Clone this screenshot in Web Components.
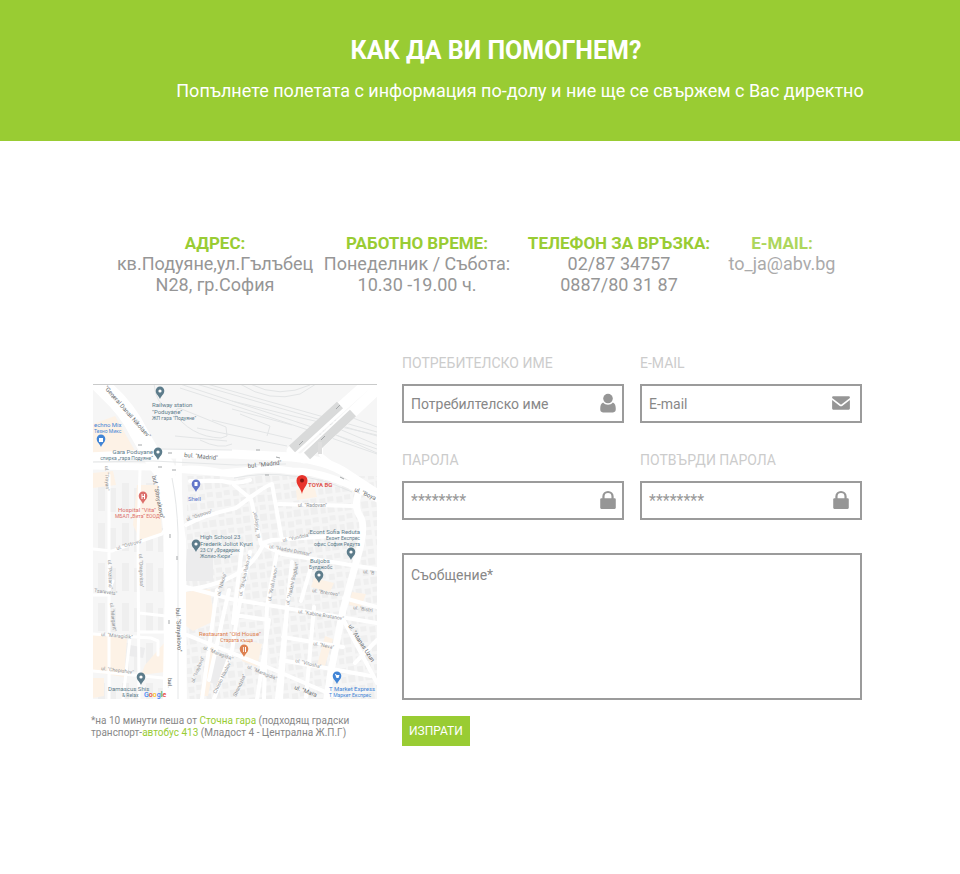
<!DOCTYPE html>
<html lang="bg">
<head>
<meta charset="utf-8">
<meta name="viewport" content="width=device-width, initial-scale=1">
<title>Как да Ви помогнем?</title>
<style>
  body { margin: 0; background: #fff; font-family: Roboto, "Liberation Sans", sans-serif; --green: #99cc33; --grey: #969696; }
</style>
</head>
<body>
<help-page></help-page>
<script>
const define = (name, html, setup) => customElements.define(name, class extends HTMLElement {
  constructor() {
    super();
    const root = this.attachShadow({ mode: 'open' });
    const t = document.createElement('template');
    t.innerHTML = html;
    root.append(t.content.cloneNode(true));
  }
  connectedCallback() { if (setup) setup(this, this.shadowRoot); }
});

define('page-banner', `
<style>
  :host { display: block; background: var(--green); color: #fff; text-align: center; padding: 36px 0 37px; }
  h1 { margin: 0; padding-left: 32px; font-size: 25px; line-height: 30px; font-weight: 700; }
  p { margin: 12px 0 0; padding-left: 80px; font-size: 18px; line-height: 26px; }
</style>
<h1><slot name="title"></slot></h1>
<p><slot></slot></p>`);

define('contact-item', `
<style>
  :host { display: block; text-align: center; white-space: nowrap; color: var(--grey); font-size: 18px; line-height: 21px; }
  :host([soft]) { opacity: .8; }
  h2 { margin: 0; color: var(--green); font-size: 17px; line-height: 20px; font-weight: 700; }
  ::slotted(a) { color: inherit; text-decoration: none; }
</style>
<h2><slot name="title"></slot></h2>
<slot></slot>`);

const icons = {
  user: '<circle cx="9" cy="5" r="4.3"/><path d="M4.6 8.6C5.8 10 7.3 10.6 9 10.6s3.200-.6 4.400-2C15.400 9.300 16 11.500 16 14.500c0 2-.8 3-2.500 3h-9C2.800 17.500 2 16.500 2 14.500c0-3 .6-5.200 2.600-5.900z"/>',
  mail: '<path d="M1 4Q1 3 2 3h14Q17 3 17 4v.6L9 10.500 1 4.600z"/><path d="M1 6.400l6.900 5.200q1.100.8 2.200 0L17 6.400V14q0 1-1 1H2q-1 0-1-1z"/>',
  lock: '<path d="M2 8.500Q2 7.500 3 7.500h12q1 0 1 1V16q0 1-1 1H3q-1 0-1-1z"/><path d="M4.900 9V5.900a4.100 4.100 0 0 1 8.200 0V9" fill="none" stroke="currentColor" stroke-width="2"/>'
};

define('text-field', `
<style>
  :host { display: block; min-width: 0; }
  label { display: block; color: #ccc; font-size: 14px; line-height: 18px; margin-bottom: 12px; text-transform: uppercase; white-space: nowrap; }
  div { display: flex; align-items: center; box-sizing: border-box; height: 39px; border: 2px solid #9b9b9b; padding: 0 var(--icon-gap, 4px) 0 7px; color: var(--grey); }
  input { flex: 1; min-width: 0; border: 0; padding: 0; outline: 0; background: none; font: 14px/20px Roboto, "Liberation Sans", sans-serif; color: #888; }
  input::placeholder { color: #888; opacity: 1; }
  input[type=password] { font-size: 16px; }
  input[type=password]::placeholder { color: #999; }
  svg { flex: none; width: 20px; height: 20px; margin-bottom: 2px; fill: currentColor; }
</style>
<label for="f"></label>
<div><input id="f"><svg viewBox="0 0 18 18" aria-hidden="true"></svg></div>`, (el, root) => {
  root.querySelector('label').textContent = el.getAttribute('label');
  const input = root.querySelector('input');
  input.type = el.getAttribute('type') || 'text';
  input.placeholder = el.getAttribute('hint');
  root.querySelector('svg').innerHTML = icons[el.getAttribute('icon')];
});

define('contact-form', `
<style>
  :host { display: block; }
  form { display: grid; grid-template-columns: 1fr 1fr; gap: 28px 16px; }
  .wide { --icon-gap: 9px; }
  textarea { grid-column: 1 / -1; display: block; box-sizing: border-box; width: 100%; height: 147px; margin: 5px 0 0; border: 2px solid #9b9b9b; border-radius: 0; padding: 10px 7px; resize: none; outline: 0; background: none; color: #888; font: 14px/20px Roboto, "Liberation Sans", sans-serif; }
  textarea::placeholder { color: #888; opacity: 1; }
  button { justify-self: start; margin-top: -12px; border: 0; background: var(--green); color: #fff; padding: 5px 7px; font: 12px/20px Roboto, "Liberation Sans", sans-serif; cursor: pointer; }
</style>
<form>
  <text-field label="Потребителско име" hint="Потребилтелско име" icon="user"></text-field>
  <text-field class="wide" label="E-mail" hint="E-mail" type="email" icon="mail"></text-field>
  <text-field label="Парола" hint="********" type="password" icon="lock"></text-field>
  <text-field class="wide" label="Потвърди парола" hint="********" type="password" icon="lock"></text-field>
  <textarea aria-label="Съобщение" placeholder="Съобщение*"></textarea>
  <button type="button">ИЗПРАТИ</button>
</form>`);

define('area-map', `
<style>
  :host { display: block; }
  svg { display: block; width: 100%; height: auto; font-family: Roboto, "Liberation Sans", sans-serif; font-size: 6px; }
  .road path { fill: none; stroke: #fff; stroke-linecap: round; stroke-linejoin: round; }
  .rail path { fill: none; stroke: #e3e5e6; stroke-width: 1; }
  .st text { fill: #909396; }
  .big text { fill: #666a6d; }
  .slate { fill: #5d7c8b; } .blue { fill: #4285d6; } .red { fill: #dc6f6a; } .orange { fill: #dd8050; } .violet { fill: #6276c9; }
  .end { text-anchor: end; }
</style>
<svg viewBox="93 384 284 315" role="img" aria-label="Карта">
  <defs>
    <path id="pin" d="M0 7C-1 4-4.300 2.500-4.300-1.200a4.300 4.300 0 0 1 8.600 0C4.300 2.500 1 4 0 7z"/>
    <pattern id="houses" width="17" height="19" patternUnits="userSpaceOnUse" patternTransform="rotate(-7)">
      <path d="M1 2h6v6H1zM9 1h6v5H9zM1 11h5v6H1zM8 10h7v7H8z" fill="#efefef"/>
    </pattern>
    <pattern id="blocks" width="24" height="40" patternUnits="userSpaceOnUse">
      <path d="M2 3h7v28H2zM14 8h6v24h-6z" fill="#efefef"/>
    </pattern>
  </defs>
  <rect x="93" y="384" width="284" height="315" fill="#f6f6f6"/>
  <rect x="93" y="475" width="70" height="224" fill="url(#blocks)"/>
  <path d="M187 476h190v223H187z" fill="url(#houses)"/>
  <g fill="#fdf2e6">
    <path d="M93 424l22-8 20 35-42 5zM93 473l20-2 3 14-23 3zM137 485h22l3 48-22 7-7-15z"/>
    <path d="M93 634l34 5-3 38-31-5zM145 665l20-23v30l-24 3zM176 593l34-4 4 32-21 10-11-8zM208 648l10-4-10 52h-8zM296 490l18-5 3 12-20 3zM325 636l8 3-9 30h-8zM93 678h11v18l-11 2zM314 578l20 5-4 9-19-5zM352 592l14 2-5 13-12-2zM245 640l17 4-5 23-15-6z"/>
  </g>
  <path d="M187 549h26v32h-28zM130 645l15 3-2 10-14-2zM215 655l14 5-12 25-10-4z" fill="#ececed"/>
  <g class="rail">
    <path d="M154 384q2 20 14 24M180 384l52 17 62 20 83 28M180 388l80 26 60 20 57 20M232 401l65 16 80 18M232 409l60 16M196 384l181 52M207 384l170 48M250 384q30 15 60 1M240 384q30 19 60 10l16-10M240 414l30 12-3 10M172 410q18 27 49 28l6-2-1-9-42-17q-9-5-9 5M200 440q20 10 32 4M175 436l52 5"/>
    <path d="M197 428l90 18M212 420l80 19M325 430l52 23M332 426l45 19M345 415l32 12"/>
  </g>
  <g class="road">
    <g stroke-width="2">
      <path d="M109 475v224M140 470l-2 66 1 163M93 549l19 2 50-17 5-8M93 634l58 4 7 3v14M140 632h26M139 613l27 3M93 671l70 7M130 638l-7 61M93 595h14l6-14" stroke-width="3"/>
      <path d="M186 525q18-10 50-17M236 508q30-23 36-24M234 485l17 14 10 45 11-4 92-6M272 484l10 56M279 504l74 2M184 590q60-7 78-43M262 544l20 10 75 12 20 3M242 547l-9 76M277 552l-10 54-3 92M250 552l-12 60-6 38M292 562l-15 136M311 567l-10 34M187 635l90 36 60 26M186 587l45 12 146 24M234 615l35 5-12 80M287 609l-6 90M283 637l60 10M281 660l90 16M314 607l-8 90M209 680l20-90M217 590l-15 109M230 655l-16 44" stroke-width="4"/>
      <path d="M344 598l33 9M344 621l33 62M377 640l-22 23M190 481h32q14 4 28-1" stroke-width="4"/>
    </g>
    <path d="M359 492q-6 15 2 26 4 7-1 30l-17 62-12 61-5 34" stroke-width="7"/>
    <path d="M86 370l20 20q22 20 33 43l16 28 10 13" stroke-width="18"/>
    <path d="M86 457l66-3h80l60 3q35 3 55 17l40 26" stroke-width="9"/>
    <path d="M86 466l65 1 85 7q25-8 56-3 28 0 64 17l30 15M162 475q20-11 60-2l30-3" stroke-width="7"/>
    <path d="M165 466q4 30 8 66l1 70-2 105" stroke-width="19"/>
    <path d="M179 460q-1 50 4 80v60l1 110" stroke-width="6"/>
    <path d="M292 451l78-70M304 458l85-80" stroke-width="11"/>
    <path d="M321 437v18l15 12" stroke-width="4"/>
  </g>
  <g fill="none" stroke="#d9dada" stroke-width="9"><path d="M292 449l48-44M307 456l46-43"/></g>
  <path d="M320 442v12" stroke="#dedede" stroke-width="4"/>
  <g fill="none" stroke="#e5e7e8"><path d="M93 462l60-1 83 4 50-1M160 449l72 1M172 478q5 25 6 55v166M234 478q30-6 58-2 25 0 60 16"/></g>
  <g fill="none" stroke="#a4a7a9" stroke-width="1">
    <path d="M111 397h4M138 445h4M168 453h4M158 467h4M172 470h4M256 450h4M265 475h4M276 457l4 1M299 445l4-4M321 440l4-4M336 409l4-4M340 477l4 2M170 534v4M177 556v4M169 620v4M169 680v4"/>
  </g>
  <g class="big">
    <text transform="translate(104 388) rotate(49)">"General Danail Nikolaev"</text>
    <text transform="translate(184 457) rotate(5)">bul. "Madrid"</text>
    <text transform="translate(248 468) rotate(-6)">bul. "Madrid"</text>
    <text transform="translate(152 476) rotate(79)">bul. "Sitnyakovo"</text>
    <text transform="translate(176 608) rotate(88)">bul. "Sitnyakovo"</text>
    <text transform="translate(354 491) rotate(24)">ul. "Boya</text>
    <text transform="translate(348 626) rotate(57)">ul. "Atanas Uzun</text>
    <text transform="translate(294 689) rotate(20)">ul. "Mara</text>
    <text transform="translate(168 678) rotate(90)">bul.</text>
  </g>
  <g class="st" font-size="5">
    <text transform="translate(105 466) rotate(88)">ul. "Troyan"</text>
    <text transform="translate(117 550) rotate(-17)">ul. "Ostrovo"</text>
    <text transform="translate(108 560) rotate(88)">ul. "Pozitano"</text>
    <text transform="translate(139 554) rotate(88)">ul. "Dragovitsa"</text>
    <text transform="translate(110 603) rotate(84)">ul. "Margarit"</text>
    <text transform="translate(101 636) rotate(5)">ul. "Maragidik"</text>
    <text transform="translate(101 670) rotate(7)">ul. "Chepishev"</text>
    <text transform="translate(94 592) rotate(8)">Tsarevets"</text>
    <text transform="translate(187 521) rotate(-18)">ul. "Ostrovo"</text>
    <text transform="translate(298 507)">ul. "Radovan"</text>
    <text transform="translate(283 542) rotate(-12)">ul. "Yundola"</text>
    <text transform="translate(269 548) rotate(11)">ul. "Hadzhi Dimitar"</text>
    <text transform="translate(260 538) rotate(-98)">ul. "Kaloyan"</text>
    <text transform="translate(220 596) rotate(-74)">ul. "Nikola"</text>
    <text transform="translate(242 596) rotate(-78)">ul. "Shipka Rakovo"</text>
    <text transform="translate(271 601) rotate(-79)">ul. "Krali Ivanov"</text>
    <text transform="translate(289 605) rotate(-77)">ul. "Hadzhi Bogdan"</text>
    <text transform="translate(312 592) rotate(9)">ul. "Brezovo"</text>
    <text transform="translate(298 613) rotate(9)">ul. "Kabine Bratanov"</text>
    <text transform="translate(313 645) rotate(11)">ul. "Neva"</text>
    <text transform="translate(295 662) rotate(14)">ul. "Vitosha"</text>
    <text transform="translate(203 649) rotate(22)">ul. "Maragidik"</text>
    <text transform="translate(247 668) rotate(23)">ul. "Maragidik"</text>
    <text transform="translate(194 683) rotate(-68)">ul. "Ivaylovo"</text>
    <text transform="translate(216 694) rotate(-64)">Christo Nikolov"</text>
    <text transform="translate(363 573) rotate(9)">ul. "B</text>
    <text transform="translate(353 609) rotate(9)">ul. "Bistri</text>
    <text transform="translate(236 697) rotate(-65)">Strandzha"</text>
  </g>
  <g class="slate">
    <text x="152" y="407">Railway station</text><text x="152" y="414">"Poduyane"</text><text x="152" y="420" font-size="5">ЖП гара "Подуяне"</text>
    <text class="end" x="153" y="454">Gara Poduyane</text><text class="end" x="153" y="460" font-size="5">спирка „гара Подуяне“</text>
    <text x="200" y="539">High School 23</text><text x="200" y="546">Frederik Joliot Kyuri</text><text x="200" y="552" font-size="5">23 СУ „Фредерик</text><text x="200" y="558" font-size="5">Жолио-Кюри“</text>
    <text class="end" x="360" y="534">Econt Sofia Reduta</text><text class="end" x="360" y="540" font-size="5">Еконт Експрес</text><text class="end" x="360" y="546" font-size="5">офис София Редута</text>
    <text x="310" y="563">Buljobs</text><text x="309" y="569" font-size="5">Булджобс</text>
    <text x="108" y="691">Damascus Shis</text><text x="122" y="697" font-size="5">&amp; Relax</text>
  </g>
  <g class="blue"><text x="94" y="427">echno Mix</text><text x="94" y="433" font-size="5">Техно Микс</text><text x="329" y="691">T Market Express</text><text x="329" y="697" font-size="5">Т Маркет Експрес</text></g>
  <text class="violet" x="188" y="501">Shell</text>
  <g class="red"><text x="118" y="512">Hospital "Vita"</text><text x="115" y="518" font-size="5">МБАЛ „Вита“ ЕООД</text></g>
  <g class="orange"><text x="199" y="636">Restaurant "Old House"</text><text class="end" x="253" y="642" font-size="5">Старата къща</text></g>
  <text x="308" y="487" font-weight="700" fill="#df5650">TOYA BG</text>
  <g class="slate"><use href="#pin" x="160" y="392"/><use href="#pin" x="158" y="453"/><use href="#pin" x="196" y="545"/><use href="#pin" x="351" y="553"/><use href="#pin" x="319" y="576"/><use href="#pin" x="141" y="678"/></g>
  <g class="blue"><use href="#pin" x="101" y="440"/><use href="#pin" x="337" y="677"/></g>
  <use class="violet" href="#pin" x="196" y="485"/><use class="red" href="#pin" x="143" y="497"/><use class="orange" href="#pin" x="244" y="650"/>
  <g fill="#fff"><circle cx="160" cy="391" r="1.600"/><circle cx="158" cy="452" r="1.600"/><circle cx="196" cy="544" r="1.600"/><circle cx="351" cy="552" r="1.600"/><circle cx="319" cy="575" r="1.600"/><circle cx="141" cy="677" r="1.600"/>
    <path d="M99 438h4v4h-4zM335 674h1l.5 1h3l-1 3h-2zM194.500 482h3v4h-3zM243 647h.8v5H243zM245 647h1v5h-1z"/></g>
  <path d="M142 494v5M144.500 494v5M142 496.500h2.500" stroke="#fff"/>
  <path d="M302 494c-1-6-5.500-8-5.500-13.500a5.500 5.500 0 0 1 11 0C307.500 486 303 488 302 494z" fill="#e8352c"/><circle cx="302" cy="480.500" r="2" fill="#85150f"/>
  <text x="144" y="697" font-size="7" font-weight="500"><tspan fill="#4285f4">G</tspan><tspan fill="#ea4335">o</tspan><tspan fill="#fbbc05">o</tspan><tspan fill="#4285f4">g</tspan><tspan fill="#34a853">l</tspan><tspan fill="#ea4335">e</tspan></text>
  <path d="M93 384.500h284" stroke="#c9caca"/>
</svg>`);

define('help-page', `
<style>
  :host { display: block; }
  main { padding: 92px 98px 128px 93px; }
  .contacts { display: grid; grid-template-columns: 202fr 202fr 202fr 124fr; padding: 0 18px 0 21px; }
  .body { display: grid; grid-template-columns: 284fr 460fr; gap: 25px; margin-top: 59px; align-items: start; }
  .place { padding-top: 30px; min-width: 0; }
  .note { margin: 16px 0 0 -2px; font-size: 10px; line-height: 12px; color: #888; }
  .note a { color: var(--green); text-decoration: none; }
</style>
<page-banner><span slot="title">КАК ДА ВИ ПОМОГНЕМ?</span>Попълнете полетата с информация по-долу и ние ще се свържем с Вас директно</page-banner>
<main>
  <section class="contacts">
    <contact-item><span slot="title">АДРЕС:</span>кв.Подуяне,ул.Гълъбец<br>N28, гр.София</contact-item>
    <contact-item><span slot="title">РАБОТНО ВРЕМЕ:</span>Понеделник / Събота:<br>10.30 -19.00 ч.</contact-item>
    <contact-item><span slot="title">ТЕЛЕФОН ЗА ВРЪЗКА:</span>02/87 34757<br>0887/80 31 87</contact-item>
    <contact-item soft><span slot="title">E-MAIL:</span><a href="mailto:to_ja@abv.bg">to_ja@abv.bg</a></contact-item>
  </section>
  <section class="body">
    <div class="place">
      <area-map></area-map>
      <p class="note">*на 10 минути пеша от <a href="#gara">Сточна гара</a> (подходящ градски<br>транспорт-<a href="#bus">автобус 413</a> (Младост 4 - Централна Ж.П.Г)</p>
    </div>
    <contact-form></contact-form>
  </section>
</main>`);
</script>
</body>
</html>
